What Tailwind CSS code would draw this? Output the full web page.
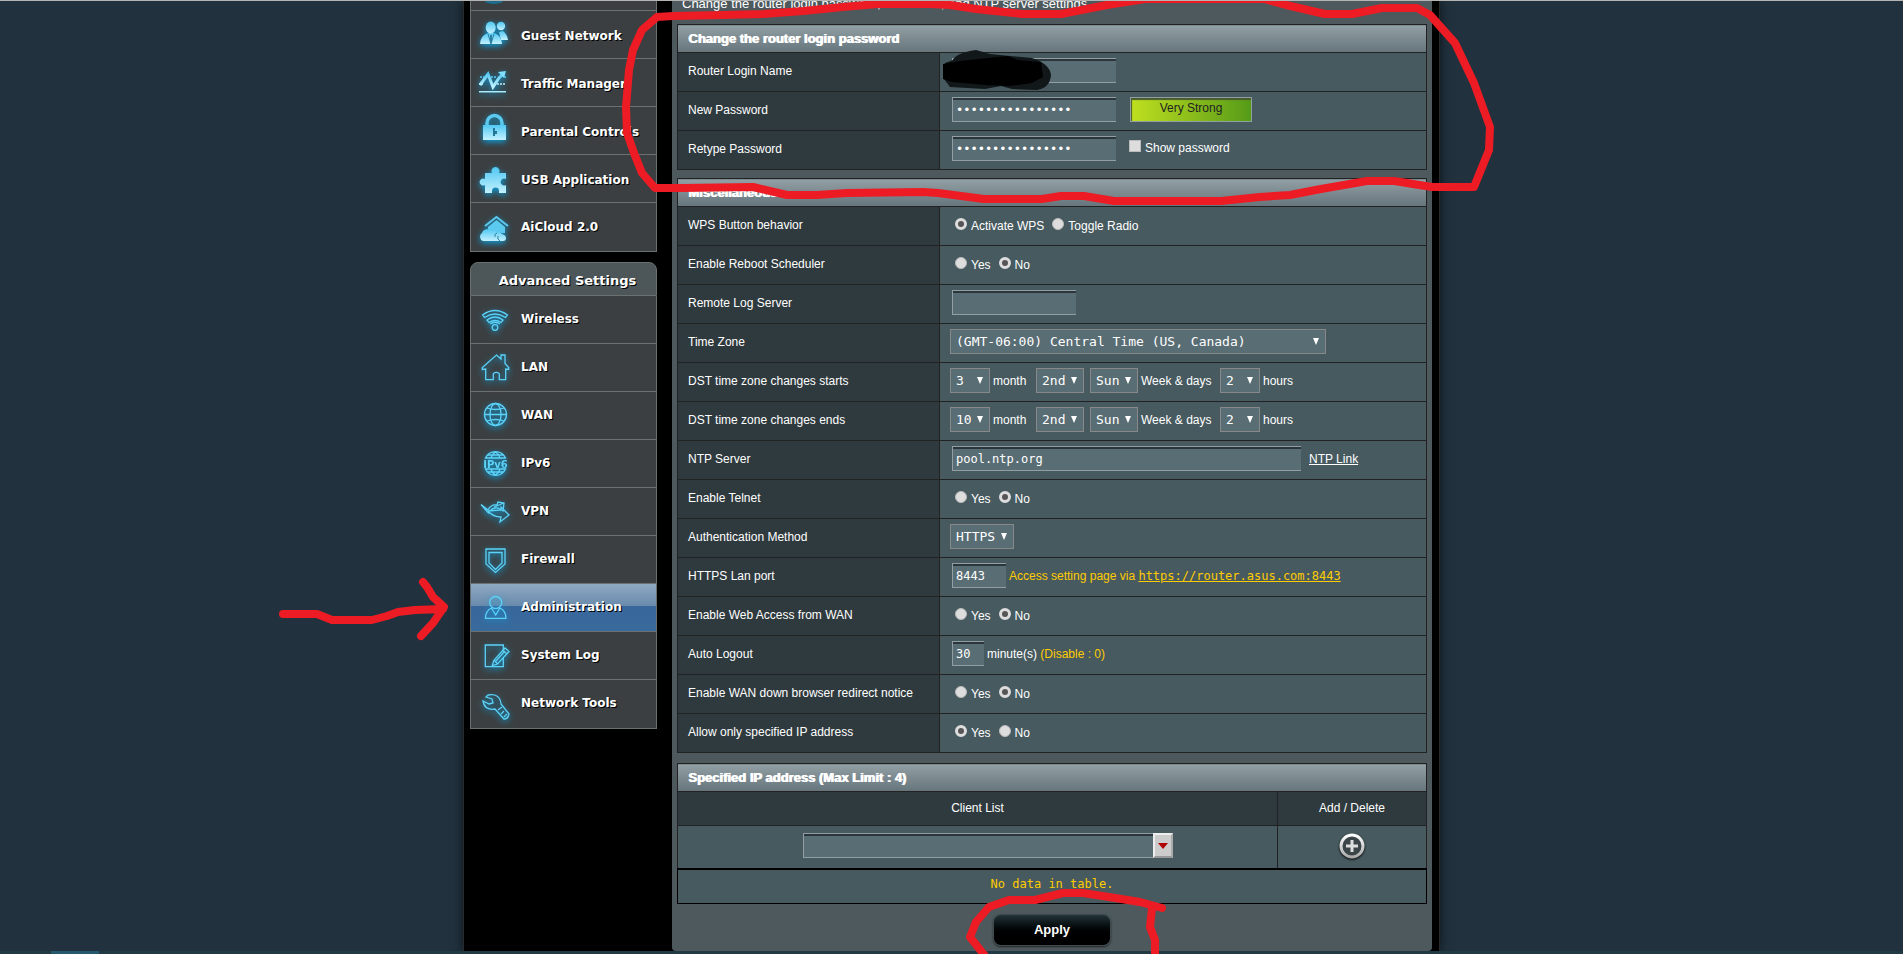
<!DOCTYPE html>
<html lang="en">
  <head>
    <meta charset="UTF-8" />
    <meta name="viewport" content="width=device-width, initial-scale=1.0" />
    <script src="https://cdn.jsdelivr.net/npm/@tailwindcss/browser@4"></script>
    <title>Administration - System</title>
  </head>

  <body class="relative min-h-screen flex flex-col overflow-hidden border-t border-[#b4b4b4] bg-[#21323e] text-xs text-white font-['Liberation_Sans',Arial,sans-serif]">
    <div class="relative flex-1 w-[977px] mx-auto flex gap-[15px] pl-1.5 pr-[7px] bg-black shadow-[0_0_10px_#0a1218] border-x border-[#2a2a2a]">
      <nav class="w-[187px] shrink-0 font-['DejaVu_Sans',Verdana,sans-serif] font-bold">
        <ul id="general" class="border border-t-0 border-[#6b7071]">
          <li class="h-[9px] overflow-hidden bg-[#3b3f41] pl-1.5">
            <svg class="w-8 h-2" viewBox="0 0 32 8"><ellipse cx="17" cy="0" rx="9" ry="3" fill="#1c6d8c" /></svg>
          </li>
        </ul>
        <h2 class="mt-2.5 h-[34px] pl-2 pt-1 flex items-center justify-center rounded-t-lg border border-[#6b7071] bg-[#4d5658] text-[13px] text-shadow-[1px_1px_0_#000]">Advanced Settings</h2>
        <ul id="advanced" class="border-x border-b border-[#6b7071]"></ul>
      </nav>

      <main class="flex-1 px-[5px] rounded-b bg-[#4d595d]">
        <p class="h-[23px] pl-[5px] -mt-1 text-[13px] leading-[14px]">Change the router login password, time zone, and NTP server settings.</p>
        <form id="settings" class="pt-1"></form>
      </main>
    </div>

    <footer class="relative h-[3px] bg-[#213a44]"><div class="ml-[51px] w-12 h-full bg-[#24596b]"></div></footer>

    <!-- hand-drawn marks -->
    <div class="absolute inset-x-0 -top-px pointer-events-none">
      <svg class="block mx-auto w-[977px] h-[954px] overflow-visible" viewBox="463 0 977 954" fill="none" stroke="#ed1c24" stroke-width="8" stroke-linecap="round" stroke-linejoin="round" aria-hidden="true">
        <path stroke="none" fill="#12181a" d="M945 63L953 60Q956 53 976 50L990 54L1010 56L1032 58Q1050 64 1051 75Q1050 88 1037 90L1012 89L1001 86L985 89L950 87L944 79Z" />
        <path stroke="none" fill="#000" d="M943 64L960 61L988 58L1008 56L1018 60L1041 62L1043 77L1032 83L1010 86L985 85L952 82L943 79Z" />
        <path d="M930 4L877 4L843 7L803 11L763 14L723 15L673 16L657 17L642 30L633 50L629 70L626 107L627 133L634 153L642 173L655 188L683 188L753 187L787 195L817 195L847 193L923 192L938 193L984 199L1042 199L1061 196L1084 196L1114 201L1221 201L1260 197L1290 195L1321 189L1367 181L1394 181L1432 187L1474 187L1489 150L1490 127L1474 83L1455 43L1430 15L1417 8L1382 8L1352 14L1325 14L1286 5L1264 -1L1145 -1L1107 5L1061 14L1022 14L976 9L950 5Z" />
        <path d="M283 614L317 614L332 620L372 620L387 616L398 612L415 610L443 609M423 582L427 587L433 597L444 607L433 623L421 636" />
        <path d="M1162 908L1140 902L1109 897L1083 893L1063 893L1035 900L1009 900L989 907L976 922L970 937L985 956M1152 908L1150 927L1155 940L1155 956" />
      </svg>
    </div>

    <script>
      // filled icons for the General menu, outlined ones for Advanced
      const icons = {
        guest: `<g fill="url(#ice)"><circle cx="24" cy="7" r="4.2"/><path d="M22 13l4-1q4 3 5 9h-7z"/><path d="M3 25q0-8 8-11h6q8 3 8 11z"/><ellipse cx="13.700" cy="8.500" rx="5" ry="6"/></g><path d="M11 15l3 10 3-10" fill="none" stroke="#2a7ea0"/><path d="M14 16v7" stroke="#2a7ea0" stroke-width="2"/>`,
        traffic: `<g fill="none" stroke="url(#ice)"><path d="M3 18L11 7l5 13 6-9 5-5" stroke-width="3"/><path d="M3 10h5M2 17h4M14 10h5M20 17h9M27 10h2" stroke-width="1.500" stroke-dasharray="2 1"/><path d="M2 21h8M20 21h9" stroke-width="1.500"/></g><path d="M2 24h27v1.500H2z" fill="#a9ebff"/><path d="M21 5l8-1-2 7z" fill="#7fe0ff"/>`,
        lock: `<path d="M10 11V8a7 7 0 0 1 15 0v3" fill="none" stroke="#5cc9ef" stroke-width="3.500"/><path d="M6 10h23v15H6z" fill="url(#ice)"/><path d="M17 13v8M19 16v3" stroke="#247699" stroke-width="2"/>`,
        puzzle: `<path d="M8 10h7a4 4 0 1 1 7 0h7v6a3.500 3.500 0 1 0 0 6v8h-7v-2a3.500 3.500 0 0 0-7 0v2H8v-8a3.500 3.500 0 1 1 0-6z" fill="url(#ice)"/>`,
        cloud: `<path d="M8 15L19.500 6 31 15" fill="none" stroke="#5cc9ef" stroke-width="2"/><path d="M11 16l8.500-7 8.500 7v6H11z" fill="#5cc9ef"/><path d="M6 30a4.500 4.500 0 0 1-1-8q1-4 7-4 6 0 8 4 3-1 5 1 4 1 4 4 0 3-3 3z" fill="url(#ice)"/><path d="M20 22q-3 1-2 4M21 25a4 4 0 0 0 2 5" stroke="#2b80a2" fill="none"/>`,
        wifi: `<path d="M5.500 11q12.500-9 25 0l-2 2.500q-10.500-7-21 0zM10 16q8-6 16 0l-2 2.500q-6-4-12 0z"/><path d="M13 20q5-3.500 10 0"/><circle cx="18" cy="23.500" r="2.800"/>`,
        house: `<path d="M8.700 17v10.700h7.600v-6q3-2.500 6 0v6h6.400V17l3 0.500v-2L28 11.500V3h-4v4l-4.500-4L5.300 15.500v2z"/>`,
        globe: `<circle cx="18.500" cy="14.500" r="11"/><ellipse cx="18.500" cy="14.500" rx="5.500" ry="11"/><path d="M10 8q8.500 3 17 0M7.500 14.500h22M10 21q8.500-3 17 0"/>`,
        ipv6: `<path d="M8.500 10a11 11 0 0 1 20 0zM8.500 21a11 11 0 0 0 20 0zM14 10q1-4 4.500-6 3.500 2 4.500 6M14 21q1 4 4.500 6 3.500-2 4.500-6M10 7h17M10 24h17"/><text x="18.500" y="19.500" text-anchor="middle" font-size="10" stroke="none" fill="#5cd2f8" font-family="DejaVu Sans">IPv6</text>`,
        vpn: `<path d="M4 8.500L11 14Q14 8 20 9l1-3 6 1-1 8-5-3q-5-1-8 3M11 15l13-1v-3l8 8-9 7 1-5Q16 21 11 15M4 8.500l8 9M27 7l-10 4"/>`,
        shield: `<path d="M9 5h19v15l-9.500 8.500L9 20z"/><path d="M12 8.500h13v10.500l-6.500 6.500-6.500-6.500z"/>`,
        user: `<circle cx="18.700" cy="10.500" r="6"/><path d="M8.500 26.300q0-7.500 6-10.300l4.200 7 4.200-7q6 2.800 6 10.300z"/>`,
        log: `<path d="M26.300 11V5h-18v21.700h18V18"/><path d="M15.300 25.500l1.500-5L28 8l4 3.500L20.500 24zM17 20l3.500 4M26 10.500l4 3.500M19 21l9-10"/>`,
        wrench: `<path d="M11 7q12-2 13 9l8 10q-1 5-5 5l-9-10Q8 23 6 13l6 3 4-1-1-4-6-2z"/><path d="M21 22l4-3M24 26l3-3M27 29l3-3"/>`,
      };

      function menuItem(name, icon, line, active) {
        const stroke = line ? `fill="none" stroke="#5cd2f8" stroke-width="1.300"` : "";
        const bg = active
          ? "bg-[linear-gradient(#8ea9c2,#6a8bac_46%,#38679b_46%,#386a9c)]"
          : "bg-[#3b3f41]";
        return `<li class="border-t border-[#6b7071] first:border-t-0 last:*:h-12">
          <a href="#" class="h-[47px] flex items-center gap-3 pl-1.5 whitespace-nowrap ${bg}">
            <svg class="w-8 h-8 shrink-0 overflow-visible drop-shadow-[0_2px_3px_#0d9fdc]" viewBox="0 0 32 32" ${stroke}>${icons[icon]}</svg>
            <span class="${line ? "pb-0.5" : "pt-0.5"} text-shadow-[1px_1px_0_#000]">${name}</span>
          </a></li>`;
      }
      document.getElementById("general").innerHTML +=
        menuItem("Guest Network", "guest") +
        menuItem("Traffic Manager", "traffic") +
        menuItem("Parental Controls", "lock") +
        menuItem("USB Application", "puzzle") +
        `<li class="border-t border-[#6b7071] bg-[#3b3f41]">
          <svg width="0" height="0" class="absolute"><linearGradient id="ice" x2="0" y2="1"><stop stop-color="#4fc8f2"/><stop offset="1" stop-color="#c4f1ff"/></linearGradient></svg>
          <a href="#" class="h-12 flex items-center gap-3 pl-1.5">
            <svg class="w-8 h-8 shrink-0 overflow-visible drop-shadow-[0_2px_3px_#0d9fdc]" viewBox="0 0 32 32">${icons.cloud}</svg>
            <span class="text-shadow-[1px_1px_0_#000]">AiCloud 2.0</span>
          </a></li>`;
      document.getElementById("advanced").innerHTML =
        menuItem("Wireless", "wifi", true) +
        menuItem("LAN", "house", true) +
        menuItem("WAN", "globe", true) +
        menuItem("IPv6", "ipv6", true) +
        menuItem("VPN", "vpn", true) +
        menuItem("Firewall", "shield", true) +
        menuItem("Administration", "user", true, true) +
        menuItem("System Log", "log", true) +
        menuItem("Network Tools", "wrench", true);

      function input(id, width, value = "", type = "text") {
        return `<input id="${id}" type="${type}" value="${value}" class="${width} h-[25px] ml-0.5 px-[3px] border border-r-0 border-[#929ea1] bg-[#596d74] shadow-[inset_0_2px_0_#2a363b] text-xs font-['DejaVu_Sans_Mono',monospace]" />`;
      }
      function select(id, width, value, label = id) {
        return `<span class="relative ${width}">
          <select id="${id}" aria-label="${label}" class="appearance-none w-full h-[25px] pl-[5px] border border-[#888] bg-[#596d74] text-[13px] font-['DejaVu_Sans_Mono',monospace]"><option>${value}</option></select>
          <svg class="absolute right-[7px] top-[9px] w-1.5 h-[7px] pointer-events-none" viewBox="0 0 6 7"><path d="M0 0h6L3 7z" fill="#fff"/></svg></span>`;
      }
      function radios(name, options, checked) {
        return options
          .map(
            (text, i) => `<label class="flex items-center gap-1 ml-2 first:ml-[5px] pt-0.5">
              <input type="radio" name="${name}" ${i === checked ? "checked" : ""} class="appearance-none w-3 h-3 mb-1 rounded-full bg-[#ddd] border border-[#bbb] checked:bg-[#555] checked:border-[#ddd] checked:border-[3px]" />${text}</label>`
          )
          .join("");
      }
      function row(label, id, content) {
        const th = id ? `<label for="${id}">${label}</label>` : label;
        return `<tr class="h-[39px]">
          <th scope="row" class="w-[262px] pl-2.5 pb-[3px] border border-[#222] bg-[#2f3a3e] text-left font-normal">${th}</th>
          <td class="pl-2.5 border border-[#222] bg-[#475a5f]"><div class="flex items-center pb-[3px] whitespace-nowrap">${content}</div></td></tr>`;
      }
      function table(title, margin, rows) {
        return `<table class="w-full border-collapse ${margin}">
          <thead><tr class="h-7"><th colspan="2" class="pl-2.5 border border-[#222] bg-linear-to-b from-[#92a0a5] to-[#66757c] text-left text-[13px] text-shadow-[1px_0_0_#fff]">${title}</th></tr></thead>
          <tbody>${rows}</tbody></table>`;
      }
      const dst = (p, month) =>
        select(p + "m", "w-10", month, "month") + `<span class="ml-[3px] w-[43px]">month</span>` +
        select(p + "w", "w-12", "2nd", "week") + `<span class="w-1.5"></span>` +
        select(p + "d", "w-12", "Sun", "day") + `<span class="ml-[3px] w-[79px]">Week &amp; days</span>` +
        select(p + "h", "w-10", "2", "hour") + `<span class="ml-[3px]">hours</span>`;

      document.getElementById("settings").innerHTML =
        table("Change the router login password", "",
          row("Router Login Name", "user", input("user", "w-[164px]")) +
          row("New Password", "pw1", input("pw1", "w-[164px]", "aaaaaaaaaaaaaaaa", "password") +
            `<span class="ml-3.5 w-[122px] h-[25px] text-center leading-5 text-[#222] border border-[#929ea1] shadow-[inset_1px_2px_1px_#475a2f] bg-linear-to-r from-[#bfe01f] to-[#559b18]">Very Strong</span>`) +
          row("Retype Password", "pw2", input("pw2", "w-[164px]", "aaaaaaaaaaaaaaaa", "password") +
            `<label class="flex items-center gap-1 ml-[13px] pb-0.5"><input type="checkbox" class="appearance-none w-3 h-3 mb-1 bg-[#ddd] border border-[#bbb]" />Show password</label>`)
        ) +
        table("Miscellaneous", "mt-2",
          row("WPS Button behavior", "", radios("wps", ["Activate WPS", "Toggle Radio"], 0)) +
          row("Enable Reboot Scheduler", "", radios("reboot", ["Yes", "No"], 1)) +
          row("Remote Log Server", "log", input("log", "w-[124px]")) +
          row("Time Zone", "tz", select("tz", "w-[376px]", "(GMT-06:00) Central Time (US, Canada)", "Time Zone")) +
          row("DST time zone changes starts", "sm", dst("s", "3")) +
          row("DST time zone changes ends", "em", dst("e", "10")) +
          row("NTP Server", "ntp", input("ntp", "w-[349px]", "pool.ntp.org") + `<a href="#" class="ml-2 underline">NTP Link</a>`) +
          row("Enable Telnet", "", radios("telnet", ["Yes", "No"], 1)) +
          row("Authentication Method", "auth", select("auth", "w-16", "HTTPS", "Authentication Method")) +
          row("HTTPS Lan port", "port", input("port", "w-[54px]", "8443") +
            `<span class="ml-[3px] text-[#fc0]">Access setting page via <a href="#" class="underline font-['DejaVu_Sans_Mono',monospace]">https://router.asus.com:8443</a></span>`) +
          row("Enable Web Access from WAN", "", radios("wan", ["Yes", "No"], 1)) +
          row("Auto Logout", "logout", input("logout", "w-8", "30") + `<span class="ml-[3px]">minute(s) <span class="text-[#fc0]">(Disable : 0)</span></span>`) +
          row("Enable WAN down browser redirect notice", "", radios("notice", ["Yes", "No"], 1)) +
          row("Allow only specified IP address", "", radios("allow", ["Yes", "No"], 0))
        ) +
        table("Specified IP address (Max Limit : 4)", "mt-2.5",
          `<tr class="h-[34px] bg-[#2f3a3e]"><th class="pb-0.5 border border-[#222] font-normal">Client List</th><th class="w-[149px] pb-0.5 border border-[#222] font-normal">Add / Delete</th></tr>
          <tr class="h-[43px] bg-[#475a5f]"><td class="border border-[#222]"><div class="flex justify-center pl-5 pb-0.5">
            <input aria-label="Client List" class="w-[350px] h-[25px] px-[3px] border border-r-0 border-[#929ea1] bg-[#596d74] shadow-[inset_0_2px_0_#2a363b]" />
            <button type="button" aria-label="Select client" class="w-5 h-[25px] flex items-center justify-center border-2 border-[#eee] border-r-[#aaa] border-b-[#999] bg-[#ccc]"><svg class="w-2.5 h-1.5" viewBox="0 0 10 6"><path d="M0 0h10L5 6z" fill="#b00000"/></svg></button>
          </div></td>
          <td class="border border-[#222]"><button type="button" aria-label="Add" class="block mx-auto mb-0.5"><svg class="block w-[26px] h-[26px] drop-shadow-[0_1px_1px_#000]" viewBox="0 0 26 26"><defs><linearGradient id="silver" x2="0" y2="1"><stop stop-color="#fff"/><stop offset="1" stop-color="#aaa"/></linearGradient></defs><circle cx="13" cy="13" r="11" fill="#3b4548" stroke="url(#silver)" stroke-width="3"/><path d="M11.500 7h3v4.500H19v3h-4.500V19h-3v-4.500H7v-3h4.500z" fill="#ddd"/></svg></button></td></tr>
          <tr class="h-[35px] bg-[#475a5f]"><td colspan="2" class="pb-1 border-2 border-x border-b border-black text-center text-[#fc0] font-['DejaVu_Sans_Mono',monospace]">No data in table.</td></tr>`
        ) +
        `<button type="submit" class="block mx-auto mt-2.5 w-[118px] h-8 rounded-lg border border-[#3f4b4f] bg-linear-to-b from-[#233439] to-black to-75% text-[13px] font-bold shadow-[0_1px_2px_#222]">Apply</button>`;
    </script>
  </body>
</html>
